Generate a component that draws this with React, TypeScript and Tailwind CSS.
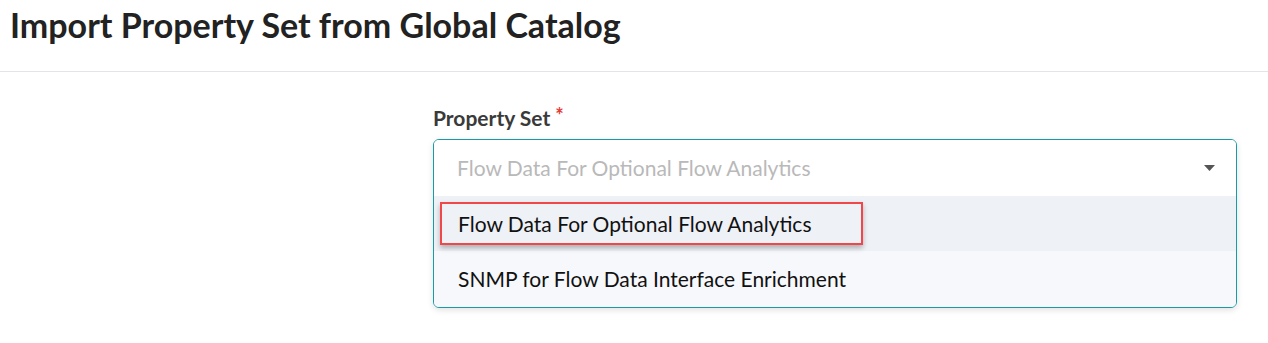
import React from "react";

export default function App() {
  return (
    <div className="w-[1268px] h-[343px] bg-white overflow-hidden" style={{ fontFamily: "Lato, 'Noto Sans', sans-serif" }}>
      <div className="h-[72px] border-b border-[#e1e4e8] pl-[10px] pt-[3px]">
        <h1 className="text-[34px] leading-[44px] font-bold text-[#222]">Import Property Set from Global Catalog</h1>
      </div>
      <div className="pl-[433px] pr-[31px] pt-[32px]">
        <div className="flex items-start text-[21px] leading-[27px] font-bold text-[#3a3a3a]">
          <span>Property Set</span>
          <span className="text-[#e53935] text-[20px] leading-[20px] ml-[5px] mt-[1px]">*</span>
        </div>
        <div className="mt-[8px] border border-[#1a9aa6] rounded-[6px] overflow-hidden shadow-[0_2px_6px_rgba(0,0,0,0.12)]">
          <div className="h-[56px] flex items-center justify-between pl-[23px] pr-[21px] bg-white">
            <span className="text-[21px] text-[#b9b9b9]">Flow Data For Optional Flow Analytics</span>
            <svg width="11" height="6" viewBox="0 0 11 6"><path d="M0 0 H11 L5.5 6 Z" fill="#555" /></svg>
          </div>
          <div className="h-[55px] flex items-center bg-[#eef1f6] pl-[6px]">
            <div className="h-[43px] w-[423px] border-[2.5px] border-[#f0474a] flex items-center pl-[16px] shadow-[0_3px_5px_rgba(0,0,0,0.28)]">
              <span className="text-[21px] text-[#111]">Flow Data For Optional Flow Analytics</span>
            </div>
          </div>
          <div className="h-[56px] flex items-center bg-[#f7f8fb] pl-[24px]">
            <span className="text-[21px] text-[#111]">SNMP for Flow Data Interface Enrichment</span>
          </div>
        </div>
      </div>
    </div>
  );
}
